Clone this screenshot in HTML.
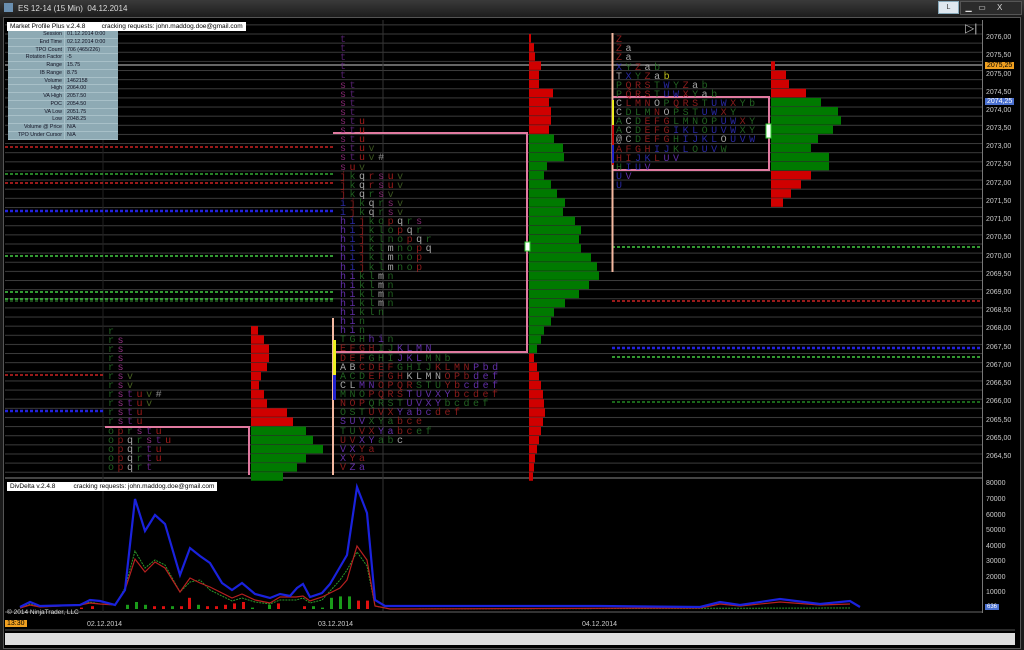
<!DOCTYPE html>
<html><head><meta charset="utf-8"><style>
*{margin:0;padding:0}
body{width:1024px;height:650px;background:#1a1a1a;overflow:hidden;font-family:"Liberation Sans",sans-serif;position:relative}
#title{position:absolute;left:0;top:0;width:1024px;height:17px;background:linear-gradient(#3a3a3a,#1c1c1c);color:#ddd;font-size:8px}
#frame{position:absolute;left:3px;top:17px;width:1016px;height:630px;background:#000;border:1px solid #555}
svg{position:absolute;left:0;top:0}
.m{font-family:"Liberation Mono",monospace;font-size:10px;letter-spacing:3.5px;opacity:0.8}
#info{position:absolute;left:8px;top:31px;width:110px;height:109px;background:#8eaab4;font-size:5.3px;color:#112;overflow:hidden}
#info div{box-sizing:border-box;height:7.78px;line-height:7px;border-bottom:1px solid #a8c0c8;display:flex}
#info span:first-child{width:54px;text-align:right;padding-right:2px;border-right:1px solid #a8c0c8}
#info span:last-child{padding-left:2px}
.hdr{position:absolute;background:#fff;color:#000;font-size:6.5px;height:9px;line-height:9px;padding:0 3px;white-space:pre}
.ax{position:absolute;left:986px;color:#ccc;font-size:7px}
</style></head><body>
<div id="title"><span style="position:absolute;left:4px;top:3px;width:9px;height:9px;background:#6a8fb0"></span><span style="position:absolute;left:18px;top:4px">ES 12-14 (15 Min)&nbsp; 04.12.2014</span>
<span style="position:absolute;left:938px;top:1px;width:19px;height:11px;background:#dfe8f0;border:1px solid #8ab;color:#333;text-align:center;font-size:7px;line-height:11px">L</span>
<span style="position:absolute;left:960px;top:1px;width:60px;height:12px;background:#2b2b2b;border:1px solid #555;color:#ddd;font-size:8px;line-height:12px">&nbsp;&nbsp;▁&nbsp;&nbsp;&nbsp;▭&nbsp;&nbsp;&nbsp;&nbsp;&nbsp;X</span></div>
<div id="frame"></div>
<svg width="1024" height="650" id="s">
<defs><pattern id="g" x="0" y="33.5" width="10" height="9.13" patternUnits="userSpaceOnUse"><rect width="10" height="1" fill="#3c3c3c"/></pattern></defs>
<rect x="5" y="20" width="977" height="457" fill="url(#g)"/>
<line x1="5" y1="478" x2="982" y2="478" fill="none" stroke="#888"/>
<line x1="5" y1="612" x2="982" y2="612" stroke="#666"/>
<line x1="982.5" y1="20" x2="982.5" y2="613" stroke="#777"/>
<line x1="5" y1="65" x2="982" y2="65" stroke="#888" stroke-width="1.5"/>
<line x1="383" y1="20" x2="383" y2="612" stroke="#333"/>
<line x1="103" y1="20" x2="103" y2="612" stroke="#222"/>
<g stroke-dasharray="3,2" stroke-width="1.5">
<line x1="5" y1="147" x2="333" y2="147" stroke="#c22"/>
<line x1="5" y1="174" x2="333" y2="174" stroke="#3a3"/>
<line x1="5" y1="183" x2="333" y2="183" stroke="#c22"/>
<line x1="5" y1="211" x2="333" y2="211" stroke="#22d" stroke-width="2.5"/>
<line x1="5" y1="256" x2="333" y2="256" stroke="#4c4"/>
<line x1="5" y1="292" x2="333" y2="292" stroke="#4c4"/>
<line x1="5" y1="299" x2="333" y2="299" stroke="#4c4"/>
<line x1="5" y1="301" x2="333" y2="301" stroke="#262"/>
<line x1="5" y1="375" x2="105" y2="375" stroke="#c22"/>
<line x1="5" y1="411" x2="105" y2="411" stroke="#22d" stroke-width="2.5"/>
<line x1="612" y1="247" x2="982" y2="247" stroke="#4c4"/>
<line x1="612" y1="301" x2="982" y2="301" stroke="#c22"/>
<line x1="612" y1="348" x2="982" y2="348" stroke="#22d" stroke-width="2.5"/>
<line x1="612" y1="357" x2="982" y2="357" stroke="#4c4"/>
<line x1="612" y1="402" x2="982" y2="402" stroke="#282"/>
</g>
<g id="bars"></g>
<g fill="none" stroke="#e07aa0" stroke-width="2">
<polyline points="105,427 249,427 249,475"/>
<polyline points="333,133 527,133 527,352 333,352"/>
<polyline points="612,97 769,97 769,170 612,170"/>
</g>
<line x1="612.5" y1="33" x2="612.5" y2="272" stroke="#f4b8a0" stroke-width="2"/>
<line x1="333" y1="318" x2="333" y2="475" stroke="#f4b8a0" stroke-width="2"/>
<rect x="333" y="340" width="3" height="60" fill="#ee2"/>
<rect x="333" y="375" width="3" height="25" fill="#22c"/>
<rect x="612" y="100" width="2" height="25" fill="#ee2"/>
<rect x="612" y="125" width="2" height="40" fill="#c11"/>
<rect x="612" y="145" width="2" height="18" fill="#22c"/>
<rect x="525" y="242" width="5" height="9" fill="#fff" stroke="#3c3"/>
<rect x="766" y="124" width="5" height="14" fill="#fff" stroke="#3c3"/>
<g class="m">
<text x="108" y="334" fill="#2a7a2a">r</text>
<text x="108" y="343" fill="#2a7a2a">r<tspan fill="#b23aa0">s</tspan></text>
<text x="108" y="352" fill="#2a7a2a">r<tspan fill="#b23aa0">s</tspan></text>
<text x="108" y="361" fill="#2a7a2a">r<tspan fill="#b23aa0">s</tspan></text>
<text x="108" y="370" fill="#2a7a2a">r<tspan fill="#b23aa0">s</tspan></text>
<text x="108" y="379" fill="#2a7a2a">r<tspan fill="#b23aa0">s</tspan><tspan fill="#5a7a2a">v</tspan></text>
<text x="108" y="388" fill="#2a7a2a">r<tspan fill="#b23aa0">s</tspan><tspan fill="#5a7a2a">v</tspan></text>
<text x="108" y="397" fill="#2a7a2a">r<tspan fill="#b23aa0">s</tspan><tspan fill="#7a2aa0">t</tspan><tspan fill="#c22">u</tspan><tspan fill="#5a7a2a">v</tspan><tspan fill="#aaa">#</tspan></text>
<text x="108" y="406" fill="#2a7a2a">r<tspan fill="#b23aa0">s</tspan><tspan fill="#7a2aa0">t</tspan><tspan fill="#c22">u</tspan><tspan fill="#5a7a2a">v</tspan></text>
<text x="108" y="415" fill="#2a7a2a">r<tspan fill="#b23aa0">s</tspan><tspan fill="#7a2aa0">t</tspan><tspan fill="#c22">u</tspan></text>
<text x="108" y="424" fill="#2a7a2a">r<tspan fill="#b23aa0">s</tspan><tspan fill="#7a2aa0">t</tspan><tspan fill="#c22">u</tspan></text>
<text x="108" y="434" fill="#2a7a2a">o<tspan fill="#a22">p</tspan><tspan fill="#2a7a2a">r</tspan><tspan fill="#b23aa0">s</tspan><tspan fill="#7a2aa0">t</tspan><tspan fill="#c22">u</tspan></text>
<text x="108" y="443" fill="#2a7a2a">o<tspan fill="#a22">p</tspan><tspan fill="#ccc">q</tspan><tspan fill="#2a7a2a">r</tspan><tspan fill="#b23aa0">s</tspan><tspan fill="#7a2aa0">t</tspan><tspan fill="#c22">u</tspan></text>
<text x="108" y="452" fill="#2a7a2a">o<tspan fill="#a22">p</tspan><tspan fill="#ccc">q</tspan><tspan fill="#2a7a2a">r</tspan><tspan fill="#7a2aa0">t</tspan><tspan fill="#c22">u</tspan></text>
<text x="108" y="461" fill="#2a7a2a">o<tspan fill="#a22">p</tspan><tspan fill="#ccc">q</tspan><tspan fill="#2a7a2a">r</tspan><tspan fill="#7a2aa0">t</tspan><tspan fill="#c22">u</tspan></text>
<text x="108" y="470" fill="#2a7a2a">o<tspan fill="#a22">p</tspan><tspan fill="#ccc">q</tspan><tspan fill="#2a7a2a">r</tspan><tspan fill="#7a2aa0">t</tspan></text>
</g>
<g class="m" id="p2">
<text x="340" y="42" fill="#6a2a8a">t</text>
<text x="340" y="51" fill="#6a2a8a">t</text>
<text x="340" y="60" fill="#6a2a8a">t</text>
<text x="340" y="69" fill="#6a2a8a">t</text>
<text x="340" y="78" fill="#6a2a8a">t</text>
<text x="340" y="88" fill="#a2308a">s<tspan fill="#6a2a8a">t</tspan></text>
<text x="340" y="97" fill="#a2308a">s<tspan fill="#6a2a8a">t</tspan></text>
<text x="340" y="106" fill="#a2308a">s<tspan fill="#6a2a8a">t</tspan></text>
<text x="340" y="115" fill="#a2308a">s<tspan fill="#6a2a8a">t</tspan></text>
<text x="340" y="124" fill="#a2308a">s<tspan fill="#6a2a8a">t</tspan><tspan fill="#c22">u</tspan></text>
<text x="340" y="133" fill="#a2308a">s<tspan fill="#6a2a8a">t</tspan><tspan fill="#c22">u</tspan></text>
<text x="340" y="142" fill="#a2308a">s<tspan fill="#6a2a8a">t</tspan><tspan fill="#c22">u</tspan></text>
<text x="340" y="151" fill="#a2308a">s<tspan fill="#6a2a8a">t</tspan><tspan fill="#c22">u</tspan><tspan fill="#4a6a2a">v</tspan></text>
<text x="340" y="160" fill="#a2308a">s<tspan fill="#6a2a8a">t</tspan><tspan fill="#c22">u</tspan><tspan fill="#4a6a2a">v</tspan><tspan fill="#aaa">#</tspan></text>
<text x="340" y="170" fill="#a2308a">s<tspan fill="#c22">u</tspan><tspan fill="#4a6a2a">v</tspan></text>
<text x="340" y="179" fill="#a22">j<tspan fill="#2a7a2a">k</tspan><tspan fill="#ccc">q</tspan><tspan fill="#a22">r</tspan><tspan fill="#a2308a">s</tspan><tspan fill="#c22">u</tspan><tspan fill="#4a6a2a">v</tspan></text>
<text x="340" y="188" fill="#a22">j<tspan fill="#2a7a2a">k</tspan><tspan fill="#ccc">q</tspan><tspan fill="#a22">r</tspan><tspan fill="#a2308a">s</tspan><tspan fill="#c22">u</tspan><tspan fill="#4a6a2a">v</tspan></text>
<text x="340" y="197" fill="#a22">j<tspan fill="#2a7a2a">k</tspan><tspan fill="#ccc">q</tspan><tspan fill="#2a7a2a">r</tspan><tspan fill="#a2308a">s</tspan><tspan fill="#4a6a2a">v</tspan></text>
<text x="340" y="206" fill="#33c">i<tspan fill="#a22">j</tspan><tspan fill="#2a7a2a">k</tspan><tspan fill="#ccc">q</tspan><tspan fill="#2a7a2a">r</tspan><tspan fill="#a2308a">s</tspan><tspan fill="#4a6a2a">v</tspan></text>
<text x="340" y="215" fill="#33c">i<tspan fill="#a22">j</tspan><tspan fill="#2a7a2a">k</tspan><tspan fill="#ccc">q</tspan><tspan fill="#2a7a2a">r</tspan><tspan fill="#a2308a">s</tspan><tspan fill="#4a6a2a">v</tspan></text>
<text x="340" y="224" fill="#7a3ad0">h<tspan fill="#33c">i</tspan><tspan fill="#a22">j</tspan><tspan fill="#2a7a2a">k</tspan><tspan fill="#2a7a2a">o</tspan><tspan fill="#a22">p</tspan><tspan fill="#ccc">q</tspan><tspan fill="#2a7a2a">r</tspan><tspan fill="#a2308a">s</tspan></text>
<text x="340" y="233" fill="#7a3ad0">h<tspan fill="#33c">i</tspan><tspan fill="#a22">j</tspan><tspan fill="#2a7a2a">kl</tspan><tspan fill="#2a7a2a">o</tspan><tspan fill="#a22">p</tspan><tspan fill="#ccc">q</tspan><tspan fill="#2a7a2a">r</tspan></text>
<text x="340" y="242" fill="#7a3ad0">h<tspan fill="#33c">i</tspan><tspan fill="#a22">j</tspan><tspan fill="#2a7a2a">kl</tspan><tspan fill="#2a7a2a">no</tspan><tspan fill="#a22">p</tspan><tspan fill="#ccc">q</tspan><tspan fill="#2a7a2a">r</tspan></text>
<text x="340" y="251" fill="#7a3ad0">h<tspan fill="#33c">i</tspan><tspan fill="#a22">j</tspan><tspan fill="#2a7a2a">kl</tspan><tspan fill="#ccc">m</tspan><tspan fill="#2a7a2a">no</tspan><tspan fill="#a22">p</tspan><tspan fill="#ccc">q</tspan></text>
<text x="340" y="260" fill="#7a3ad0">h<tspan fill="#33c">i</tspan><tspan fill="#a22">j</tspan><tspan fill="#2a7a2a">kl</tspan><tspan fill="#ccc">m</tspan><tspan fill="#2a7a2a">no</tspan><tspan fill="#a22">p</tspan></text>
<text x="340" y="270" fill="#7a3ad0">h<tspan fill="#33c">i</tspan><tspan fill="#a22">j</tspan><tspan fill="#2a7a2a">kl</tspan><tspan fill="#ccc">m</tspan><tspan fill="#2a7a2a">no</tspan><tspan fill="#a22">p</tspan></text>
<text x="340" y="279" fill="#7a3ad0">hi<tspan fill="#2a7a2a">kl</tspan><tspan fill="#ccc">m</tspan><tspan fill="#2a7a2a">n</tspan></text>
<text x="340" y="288" fill="#7a3ad0">hi<tspan fill="#2a7a2a">kl</tspan><tspan fill="#ccc">m</tspan><tspan fill="#2a7a2a">n</tspan></text>
<text x="340" y="297" fill="#7a3ad0">hi<tspan fill="#2a7a2a">kl</tspan><tspan fill="#ccc">m</tspan><tspan fill="#2a7a2a">n</tspan></text>
<text x="340" y="306" fill="#7a3ad0">hi<tspan fill="#2a7a2a">kl</tspan><tspan fill="#ccc">m</tspan><tspan fill="#2a7a2a">n</tspan></text>
<text x="340" y="315" fill="#7a3ad0">hi<tspan fill="#2a7a2a">kln</tspan></text>
<text x="340" y="324" fill="#7a3ad0">hi<tspan fill="#2a7a2a">n</tspan></text>
<text x="340" y="333" fill="#7a3ad0">hi<tspan fill="#2a7a2a">n</tspan></text>
<text x="340" y="342" fill="#2a7a2a">TGH<tspan fill="#7a3ad0">hi</tspan><tspan fill="#2a7a2a">n</tspan></text>
<text x="340" y="351" fill="#a22">EFGH<tspan fill="#2a7a2a">IJ</tspan><tspan fill="#7a3ad0">KLMN</tspan></text>
<text x="340" y="361" fill="#a22">DEF<tspan fill="#2a7a2a">GHI</tspan><tspan fill="#7a3ad0">JKL</tspan><tspan fill="#2a7a2a">MNb</tspan></text>
<text x="340" y="370" fill="#ccc">AB<tspan fill="#a22">CDEF</tspan><tspan fill="#2a7a2a">GHIJ</tspan><tspan fill="#a22">KLMN</tspan><tspan fill="#7a3ad0">Pbd</tspan></text>
<text x="340" y="379" fill="#2a7a2a">ACD<tspan fill="#a22">EFGH</tspan><tspan fill="#ccc">KLMN</tspan><tspan fill="#a22">OPb</tspan><tspan fill="#7a3ad0">def</tspan></text>
<text x="340" y="388" fill="#ccc">CL<tspan fill="#7a3ad0">MN</tspan><tspan fill="#a22">OPQR</tspan><tspan fill="#2a7a2a">STU</tspan><tspan fill="#a22">Yb</tspan><tspan fill="#7a3ad0">cdef</tspan></text>
<text x="340" y="397" fill="#2a7a2a">MNO<tspan fill="#a22">PQRS</tspan><tspan fill="#7a3ad0">TUVXY</tspan><tspan fill="#a22">bcdef</tspan></text>
<text x="340" y="406" fill="#a22">NOP<tspan fill="#2a7a2a">QRST</tspan><tspan fill="#7a3ad0">UVXY</tspan><tspan fill="#2a7a2a">bcdef</tspan></text>
<text x="340" y="415" fill="#2a7a2a">OST<tspan fill="#a22">UVX</tspan><tspan fill="#7a3ad0">Yabc</tspan><tspan fill="#a22">def</tspan></text>
<text x="340" y="424" fill="#7a3ad0">SUV<tspan fill="#2a7a2a">XYa</tspan><tspan fill="#a22">bce</tspan></text>
<text x="340" y="434" fill="#2a7a2a">TU<tspan fill="#a22">VX</tspan><tspan fill="#7a3ad0">Ya</tspan><tspan fill="#a22">bc</tspan><tspan fill="#2a7a2a">ef</tspan></text>
<text x="340" y="443" fill="#a22">UV<tspan fill="#7a3ad0">XY</tspan><tspan fill="#2a7a2a">ab</tspan><tspan fill="#ccc">c</tspan></text>
<text x="340" y="452" fill="#7a3ad0">VX<tspan fill="#a22">Ya</tspan></text>
<text x="340" y="461" fill="#7a3ad0">X<tspan fill="#a22">Ya</tspan></text>
<text x="340" y="470" fill="#a22">V<tspan fill="#7a3ad0">Za</tspan></text>
</g>
<g class="m">
<text x="616" y="42" fill="#a22">Z</text>
<text x="616" y="51" fill="#a22">Z<tspan fill="#ccc">a</tspan></text>
<text x="616" y="60" fill="#a22">Z<tspan fill="#ccc">a</tspan></text>
<text x="616" y="70" fill="#33c">X<tspan fill="#2a7a2a">Y</tspan><tspan fill="#a22">Z</tspan><tspan fill="#ccc">a</tspan><tspan fill="#2a7a2a">b</tspan></text>
<text x="616" y="79" fill="#ccc">T<tspan fill="#33c">X</tspan><tspan fill="#2a7a2a">Y</tspan><tspan fill="#a22">Z</tspan><tspan fill="#ccc">a</tspan><tspan fill="#ee2">b</tspan></text>
<text x="616" y="88" fill="#2a7a2a">P<tspan fill="#a22">QRS</tspan><tspan fill="#2a7a2a">T</tspan><tspan fill="#33c">W</tspan><tspan fill="#2a7a2a">Y</tspan><tspan fill="#a22">Z</tspan><tspan fill="#ccc">a</tspan><tspan fill="#2a7a2a">b</tspan></text>
<text x="616" y="97" fill="#2a7a2a">P<tspan fill="#a22">QRS</tspan><tspan fill="#2a7a2a">T</tspan><tspan fill="#33c">UW</tspan><tspan fill="#a22">X</tspan><tspan fill="#2a7a2a">Y</tspan><tspan fill="#ccc">a</tspan><tspan fill="#2a7a2a">b</tspan></text>
<text x="616" y="106" fill="#ccc">C<tspan fill="#a22">LMN</tspan><tspan fill="#ccc">O</tspan><tspan fill="#2a7a2a">P</tspan><tspan fill="#a22">QRS</tspan><tspan fill="#2a7a2a">T</tspan><tspan fill="#33c">UW</tspan><tspan fill="#a22">X</tspan><tspan fill="#2a7a2a">Yb</tspan></text>
<text x="616" y="115" fill="#ccc">C<tspan fill="#2a7a2a">DLM</tspan><tspan fill="#a22">N</tspan><tspan fill="#ccc">O</tspan><tspan fill="#2a7a2a">PST</tspan><tspan fill="#33c">UW</tspan><tspan fill="#a22">X</tspan><tspan fill="#2a7a2a">Y</tspan></text>
<text x="616" y="124" fill="#2a7a2a">A<tspan fill="#ccc">C</tspan><tspan fill="#2a7a2a">D</tspan><tspan fill="#a22">EFG</tspan><tspan fill="#2a7a2a">LMNOP</tspan><tspan fill="#33c">UW</tspan><tspan fill="#a22">X</tspan><tspan fill="#2a7a2a">Y</tspan></text>
<text x="616" y="133" fill="#2a7a2a">A<tspan fill="#ccc">C</tspan><tspan fill="#2a7a2a">D</tspan><tspan fill="#a22">EFG</tspan><tspan fill="#33c">IKL</tspan><tspan fill="#2a7a2a">O</tspan><tspan fill="#33c">UVW</tspan><tspan fill="#2a7a2a">XY</tspan></text>
<text x="616" y="142" fill="#ccc">@C<tspan fill="#2a7a2a">D</tspan><tspan fill="#a22">EFG</tspan><tspan fill="#2a7a2a">H</tspan><tspan fill="#33c">IJKL</tspan><tspan fill="#ccc">O</tspan><tspan fill="#33c">UVW</tspan></text>
<text x="616" y="152" fill="#a22">AFGH<tspan fill="#33c">IJ</tspan><tspan fill="#2a7a2a">K</tspan><tspan fill="#33c">L</tspan><tspan fill="#2a7a2a">O</tspan><tspan fill="#33c">UV</tspan><tspan fill="#2a7a2a">W</tspan></text>
<text x="616" y="161" fill="#a22">HI<tspan fill="#33c">JK</tspan><tspan fill="#a22">L</tspan><tspan fill="#7a3ad0">UV</tspan></text>
<text x="616" y="170" fill="#2a7a2a">H<tspan fill="#33c">IU</tspan><tspan fill="#7a3ad0">V</tspan></text>
<text x="616" y="179" fill="#33c">U<tspan fill="#7a3ad0">V</tspan></text>
<text x="616" y="188" fill="#33c">U</text>
</g>
<g id="low"></g>
<polyline fill="none" stroke="#2a9a2a" stroke-width="1" stroke-dasharray="2,1" points="20,608 30,604 40,607 80,605 90,602 100,604 115,605 125,588 135,551 145,568 155,560 165,565 180,592 190,582 200,580 210,590 232,601 242,598 255,602 270,604 280,600 296,600 303,598 310,603 322,600 340,580 347,570 357,552 367,566 375,606 390,609 850,608"/>
<polyline fill="none" stroke="#b82020" stroke-width="1.2" points="20,608 30,605 40,607 80,605 90,603 100,604 115,605 125,590 135,559 145,572 155,562 165,568 180,592 190,578 200,583 210,587 232,598 242,594 255,600 270,603 280,597 296,597 303,596 310,601 322,597 340,588 347,580 357,546 367,560 375,606 390,609 700,608 720,604 740,606 780,602 820,605 850,604"/>
<polyline fill="none" stroke="#1a22dd" stroke-width="2.2" points="20,607 30,602 40,606 80,605 90,600 100,601 115,605 125,590 135,499 145,531 155,515 165,524 180,575 190,548 200,556 210,563 222,583 232,590 242,583 255,594 270,598 280,594 290,596 297,588 303,584 310,597 322,593 330,584 340,567 347,555 357,487 367,513 375,600 385,606 600,606 700,607 720,602 740,605 780,599 820,604 850,601 860,607"/>
<line x1="5" y1="630" x2="1015" y2="630" stroke="#555"/>
<rect x="5" y="633" width="1010" height="12" fill="#dedede"/>
</svg>
<div class="hdr" style="left:7px;top:22px">Market Profile Plus v.2.4.8         cracking requests: john.maddog.doe@gmail.com</div>
<div id="info">
<div><span>Session</span><span>01.12.2014 0:00</span></div>
<div><span>End Time</span><span>02.12.2014 0:00</span></div>
<div><span>TPO Count</span><span>706 (465/226)</span></div>
<div><span>Rotation Factor</span><span>-5</span></div>
<div><span>Range</span><span>15.75</span></div>
<div><span>IB Range</span><span>8.75</span></div>
<div><span>Volume</span><span>1462158</span></div>
<div><span>High</span><span>2064.00</span></div>
<div><span>VA High</span><span>2057.50</span></div>
<div><span>POC</span><span>2054.50</span></div>
<div><span>VA Low</span><span>2051.75</span></div>
<div><span>Low</span><span>2048.25</span></div>
<div><span>Volume @ Price</span><span>N/A</span></div>
<div><span>TPO Under Cursor</span><span>N/A</span></div>
</div>
<div class="hdr" style="left:7px;top:482px">DivDelta v.2.4.8          cracking requests: john.maddog.doe@gmail.com</div>
<div style="position:absolute;left:7px;top:609px;color:#ddd;font-size:6.5px">© 2014 NinjaTrader, LLC</div>
<div style="position:absolute;left:5px;top:620px;background:#f0a020;color:#000;font-size:7px;padding:0 2px">13:30</div>
<div style="position:absolute;left:87px;top:621px;color:#ccc;font-size:7px">02.12.2014</div>
<div style="position:absolute;left:318px;top:621px;color:#ccc;font-size:7px">03.12.2014</div>
<div style="position:absolute;left:582px;top:621px;color:#ccc;font-size:7px">04.12.2014</div>
<div style="position:absolute;left:965px;top:22px;color:#bbb;font-size:12px;line-height:12px">▷|</div>
<div class="ax" style="top:34px">2076,00</div><div class="ax" style="top:52px">2075,50</div>
<div class="ax" style="top:71px">2075,00</div><div class="ax" style="top:89px">2074,50</div>
<div class="ax" style="top:107px">2074,00</div><div class="ax" style="top:125px">2073,50</div>
<div class="ax" style="top:143px">2073,00</div><div class="ax" style="top:161px">2072,50</div>
<div class="ax" style="top:180px">2072,00</div><div class="ax" style="top:198px">2071,50</div>
<div class="ax" style="top:216px">2071,00</div><div class="ax" style="top:234px">2070,50</div>
<div class="ax" style="top:253px">2070,00</div><div class="ax" style="top:271px">2069,50</div>
<div class="ax" style="top:289px">2069,00</div><div class="ax" style="top:307px">2068,50</div>
<div class="ax" style="top:325px">2068,00</div><div class="ax" style="top:344px">2067,50</div>
<div class="ax" style="top:362px">2067,00</div><div class="ax" style="top:380px">2066,50</div>
<div class="ax" style="top:398px">2066,00</div><div class="ax" style="top:417px">2065,50</div>
<div class="ax" style="top:435px">2065,00</div><div class="ax" style="top:453px">2064,50</div>
<div class="ax" style="top:480px">80000</div><div class="ax" style="top:496px">70000</div>
<div class="ax" style="top:512px">60000</div><div class="ax" style="top:527px">50000</div>
<div class="ax" style="top:543px">40000</div><div class="ax" style="top:558px">30000</div>
<div class="ax" style="top:574px">20000</div><div class="ax" style="top:589px">10000</div>
<div style="position:absolute;left:985px;top:62px;background:#f0a020;color:#000;font-size:7px;padding:0 2px">2075,25</div>
<div style="position:absolute;left:985px;top:98px;background:#4a70d0;color:#fff;font-size:7px;padding:0 2px">2074,25</div>
<div style="position:absolute;left:985px;top:604px;background:#4a70d0;color:#fff;font-size:6px;padding:0 2px">636</div>
<script>
(function(){
var ns="http://www.w3.org/2000/svg",g=document.getElementById('bars'),lo=document.getElementById('low');
function r(p,x,y,w,h,c){var e=document.createElementNS(ns,'rect');e.setAttribute('x',x);e.setAttribute('y',y);e.setAttribute('width',w);e.setAttribute('height',h);e.setAttribute('fill',c);p.appendChild(e);}
function Y(k){return 34+k*9.13;}
function prof(x,k0,arr){arr.forEach(function(a,i){r(g,x,Y(k0+i),a[0],8.5,a[1]?'#007a00':'#d00000');});}
var R=0,G=1,p=[];
[2,5,6,12,10,10,24,20,22,22,20].forEach(function(w){p.push([w,R]);});
[25,34,35,18,15,22,28,36,34,46,52,50,52,62,68,70,60,50,36,25,22,15,12,8].forEach(function(w){p.push([w,G]);});
[5,8,10,12,14,15,16,14,12,10,8,6,5,4].forEach(function(w){p.push([w,R]);});
prof(529,0,p);
p=[];[7,13,18,18,16,10,8,13,16,36,42].forEach(function(w){p.push([w,R]);});
[55,62,72,55,46,32].forEach(function(w){p.push([w,G]);});prof(251,32,p);
p=[];[4,15,18,35].forEach(function(w){p.push([w,R]);});
[50,67,70,62,47,40,58,58].forEach(function(w){p.push([w,G]);});
[40,30,20,12].forEach(function(w){p.push([w,R]);});prof(771,3,p);
var b=[[126,3,G],[135,5,G],[144,3,G],[153,2,R],[162,2,R],[171,2,G],[180,2,R],[188,8,R],[197,3,G],[206,2,R],[215,2,R],[224,3,R],[233,4,R],[242,5,R],[251,1,G],[268,3,G],[277,4,R],[303,2,R],[312,2,G],[321,1,G],[330,8,G],[339,9,G],[348,9,G],[357,6,R],[366,6,R],[80,1,R],[91,2,R]];
b.forEach(function(a){r(lo,a[0],609-a[1]*1.4,3,a[1]*1.4,a[2]?'#1a9a1a':'#e01010');});
})();
</script>
</body></html>
